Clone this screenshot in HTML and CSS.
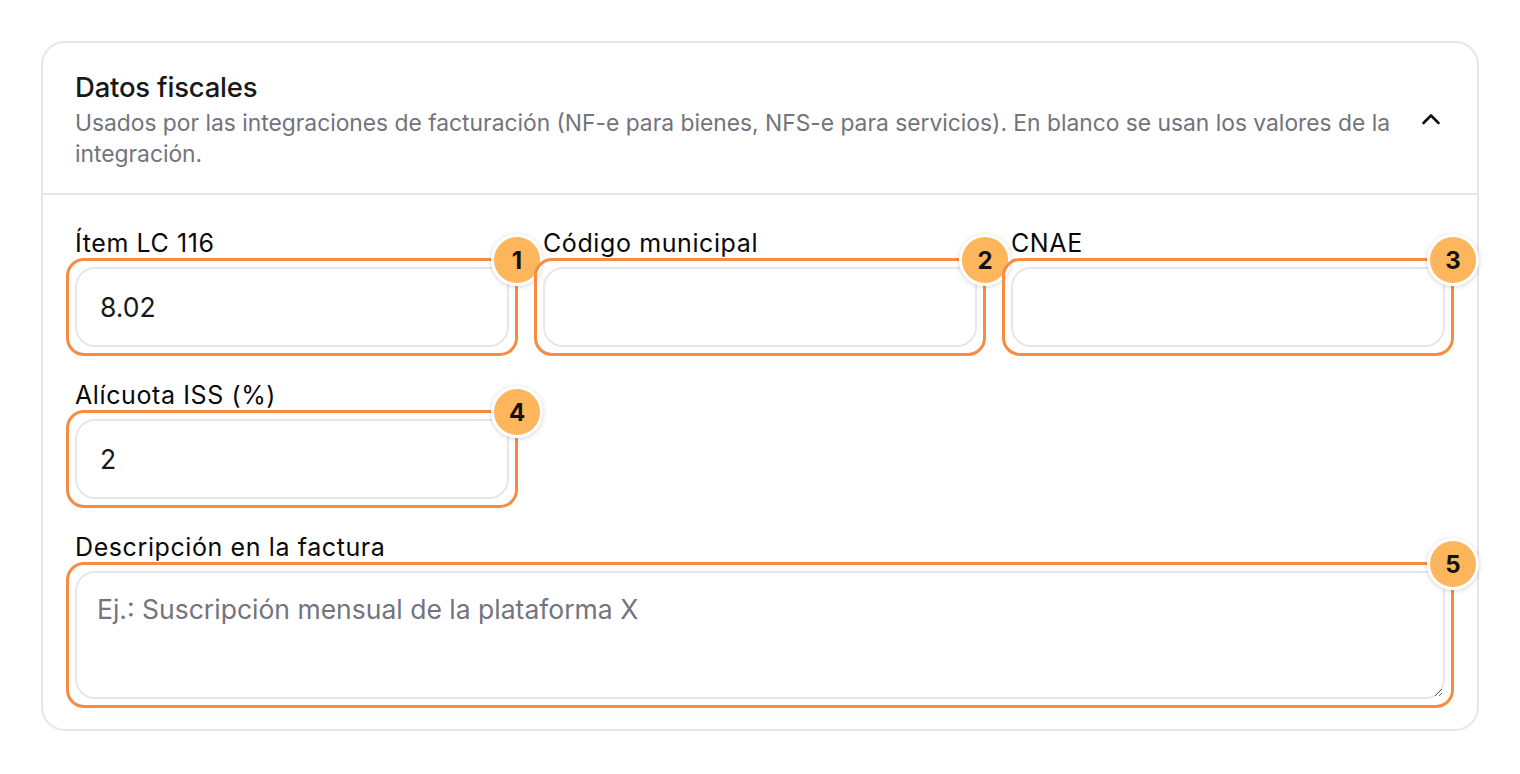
FILE: index.html
```html
<!DOCTYPE html>
<html lang="es">
<head>
    <meta charset="UTF-8">
    <meta name="viewport" content="width=device-width, initial-scale=1.0">
    <title>Datos fiscales</title>
    <link rel="stylesheet" href="styles.css">
</head>
<body>
    <div class="page">
        <section class="card">
            <div class="card-header">
                <div class="header-text">
                    <h2 class="card-title">Datos fiscales</h2>
                    <p class="card-desc">Usados por las integraciones de facturación (NF-e para bienes, NFS-e para servicios). En blanco se usan los valores de la integración.</p>
                </div>
                <button class="toggle" type="button" aria-label="Contraer">
                    <svg width="20" height="12" viewBox="0 0 20 12" fill="none">
                        <path d="M2.5 10L10 2.5L17.5 10" stroke="#111" stroke-width="2.6" stroke-linecap="round" stroke-linejoin="round"/>
                    </svg>
                </button>
            </div>

            <div class="card-body">
                <div class="row">
                    <div class="field">
                        <label class="label" for="item-lc">Ítem LC 116</label>
                        <div class="control">
                            <input id="item-lc" class="input" type="text" value="8.02">
                            <span class="mark"><span class="badge">1</span></span>
                        </div>
                    </div>
                    <div class="field">
                        <label class="label" for="cod-mun">Código municipal</label>
                        <div class="control">
                            <input id="cod-mun" class="input" type="text">
                            <span class="mark"><span class="badge">2</span></span>
                        </div>
                    </div>
                    <div class="field">
                        <label class="label" for="cnae">CNAE</label>
                        <div class="control">
                            <input id="cnae" class="input" type="text">
                            <span class="mark"><span class="badge">3</span></span>
                        </div>
                    </div>
                </div>

                <div class="row">
                    <div class="field">
                        <label class="label" for="iss">Alícuota ISS (%)</label>
                        <div class="control">
                            <input id="iss" class="input" type="text" value="2">
                            <span class="mark"><span class="badge">4</span></span>
                        </div>
                    </div>
                </div>

                <div class="field">
                    <label class="label" for="desc">Descripción en la factura</label>
                    <div class="control">
                        <textarea id="desc" class="input textarea" placeholder="Ej.: Suscripción mensual de la plataforma X"></textarea>
                        <span class="mark"><span class="badge">5</span></span>
                    </div>
                </div>
            </div>
        </section>
    </div>
</body>
</html>
```

FILE: styles.css
```css
* {
    box-sizing: border-box;
}

body {
    margin: 0;
    background-color: #fff;
    font-family: Inter, "Noto Sans", sans-serif;
    color: #18181b;
}

.page {
    padding: 41px;
}

.card {
    border: 2px solid #e7e7e9;
    border-radius: 24px;
    background-color: #fff;
}

.card-header {
    display: flex;
    align-items: center;
    gap: 24px;
    padding: 26px 32px 24px 32px;
    border-bottom: 2px solid #e7e7e9;
}

.header-text {
    flex: 1;
}

.card-title {
    margin: 0;
    font-size: 27.5px;
    font-weight: 500;
    line-height: 36px;
    letter-spacing: -0.2px;
}

.card-desc {
    margin: 2px 0 0 0;
    font-size: 22.8px;
    line-height: 31px;
    color: #72737c;
}

.toggle {
    display: flex;
    align-items: center;
    justify-content: center;
    width: 32px;
    height: 32px;
    padding: 0;
    margin-right: -2px;
    border: none;
    background: none;
    cursor: pointer;
}

.card-body {
    display: flex;
    flex-direction: column;
    gap: 33px;
    padding: 33px 32px 30px 32px;
}

.row {
    display: grid;
    grid-template-columns: repeat(3, 1fr);
    column-gap: 34px;
}

.field {
    display: flex;
    flex-direction: column;
}

.label {
    font-size: 25px;
    font-weight: 400;
    line-height: 30px;
    margin-bottom: 9px;
    letter-spacing: 0.6px;
    color: #09090b;
}

.control {
    position: relative;
}

.input {
    display: block;
    width: 100%;
    height: 80px;
    padding: 0 23px;
    border: 2px solid #e7e7e9;
    border-radius: 20px;
    background-color: #fff;
    font-family: inherit;
    font-size: 26.5px;
    color: #18181b;
    outline: none;
}

.textarea {
    height: 128px;
    padding: 19px 20px;
    line-height: 34px;
    resize: vertical;
}

.textarea::placeholder {
    color: #73747d;
}

.mark {
    position: absolute;
    inset: -9px;
    border: 3px solid #f78b42;
    border-radius: 18px;
    pointer-events: none;
}

.badge {
    position: absolute;
    top: -27px;
    right: -28px;
    width: 52px;
    height: 52px;
    display: flex;
    align-items: center;
    justify-content: center;
    border: 3px solid #fff;
    border-radius: 50%;
    background-color: #fdb65c;
    box-shadow: 0 1px 5px rgba(0, 0, 0, 0.18);
    font-size: 24px;
    font-weight: 700;
    color: #111;
}
```
